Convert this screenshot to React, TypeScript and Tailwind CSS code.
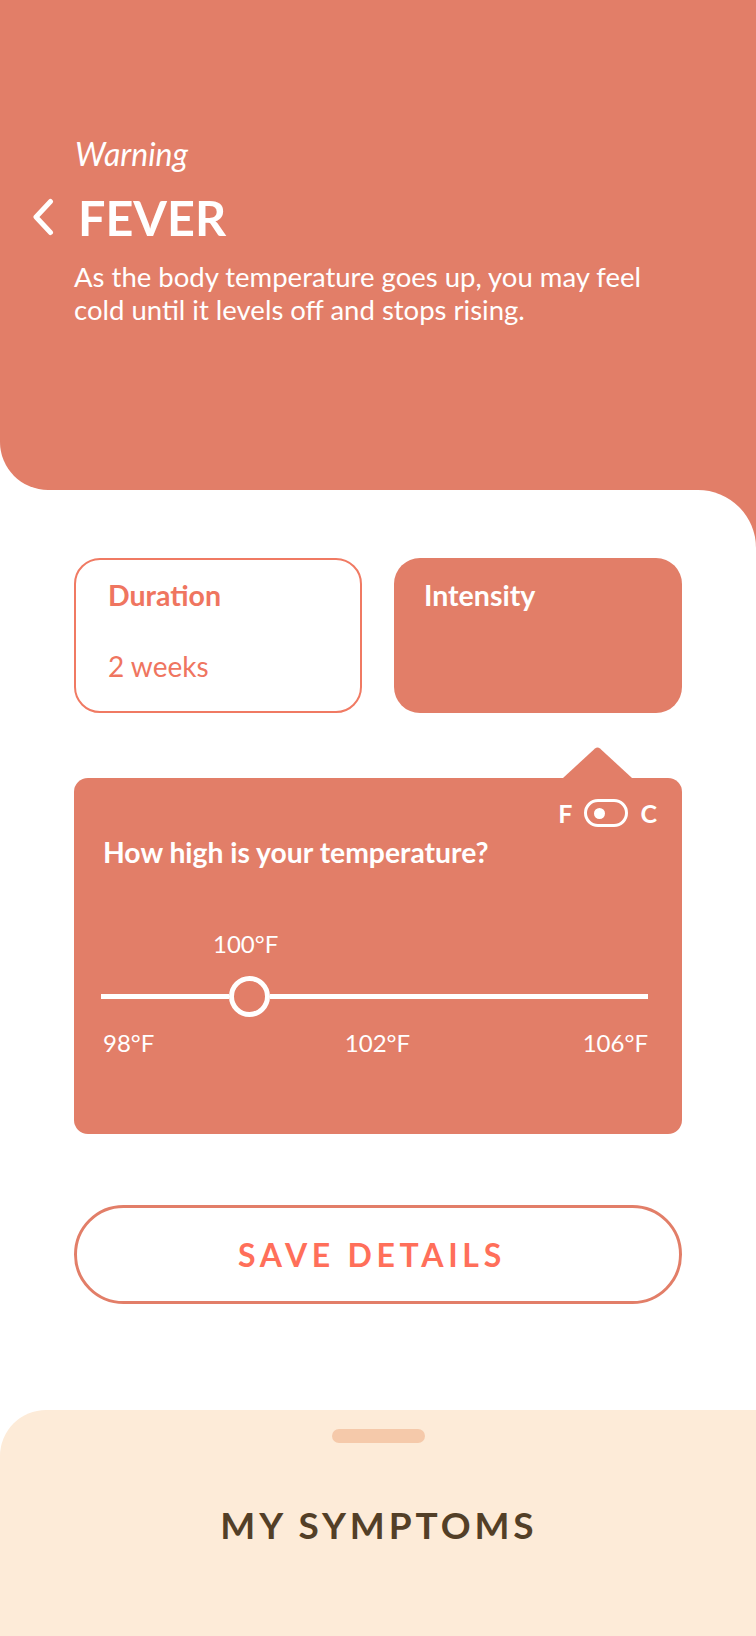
import React from "react"

const ticks = ["98°F", "102°F", "106°F"]

function BackChevron() {
    return (
        <svg width="24" height="38" viewBox="0 0 24 38" fill="none" className="shrink-0">
            <path d="M19.5 3.5L5 19L19.5 34.5" stroke="white" strokeWidth="5" strokeLinecap="round" strokeLinejoin="round" />
        </svg>
    )
}

function UnitToggle() {
    return (
        <div className="-mr-[9px] flex items-center gap-[12px] text-[25px] font-bold leading-none text-white">
            <span>F</span>
            <div className="flex h-[28px] w-[44px] items-center rounded-full border-[3px] border-white pl-[7px]">
                <div className="h-[11px] w-[11px] rounded-full bg-white" />
            </div>
            <span>C</span>
        </div>
    )
}

function TempSlider() {
    return (
        <div className="flex h-[41px] items-center">
            <div className="h-[5px] w-[128px] bg-white" />
            <div className="h-[41px] w-[41px] shrink-0 rounded-full border-[5px] border-white bg-[#E27E68]" />
            <div className="h-[5px] flex-1 bg-white" />
        </div>
    )
}

export default function App() {
    return (
        <div className="flex h-[1636px] flex-col overflow-hidden bg-white font-['Lato',sans-serif]">
            <header className="h-[490px] shrink-0 rounded-bl-[48px] bg-[#E27E68] px-[31px] pt-[136px] text-white">
                <p className="pl-[44px] text-[32px] italic leading-[36px]">Warning</p>
                <div className="mt-[17px] flex items-center gap-[23px]">
                    <BackChevron />
                    <h1 className="text-[48.5px] font-bold leading-[56px]">FEVER</h1>
                </div>
                <p className="mt-[15px] max-w-[650px] pl-[43px] text-[27.5px] leading-[33px]">
                    As the body temperature goes up, you may feel cold until it levels off and stops rising.
                </p>
            </header>

            <div className="shrink-0 bg-[#E27E68]">
                <main className="rounded-tr-[58px] bg-white px-[74px] pt-[68px]">
                    <div className="grid grid-cols-2 gap-[32px]">
                        <div className="h-[155px] rounded-[26px] border-2 border-[#F07A63] px-[32px] pt-[19px] text-[#EF7560]">
                            <p className="text-[28.5px] font-bold leading-[32px]">Duration</p>
                            <p className="mt-[39px] text-[28px] leading-[32px]">2 weeks</p>
                        </div>
                        <div className="h-[155px] rounded-[26px] bg-[#E27E68] px-[30px] pt-[21px] text-white">
                            <p className="text-[28.5px] font-bold leading-[32px]">Intensity</p>
                        </div>
                    </div>

                    <div className="mt-[33px] flex justify-end pr-[50px]">
                        <svg width="69" height="32" viewBox="0 0 69 32" className="block">
                            <path d="M0 32L32 2.5Q34.5 0.5 37 2.5L69 32Z" fill="#E27E68" />
                        </svg>
                    </div>

                    <section className="h-[356px] rounded-[14px] bg-[#E27E68] pl-[27px] pr-[34px] pt-[21px] text-white">
                        <div className="flex justify-end">
                            <UnitToggle />
                        </div>
                        <p className="mt-[9px] ml-[2px] text-[28.3px] font-bold leading-[32px]">
                            How high is your temperature?
                        </p>
                        <p className="mt-[61px] ml-[112px] text-[24px] leading-[30px]">100°F</p>
                        <div className="mt-[17px]">
                            <TempSlider />
                        </div>
                        <div className="mt-[11px] grid grid-cols-3 text-[24px] leading-[30px]">
                            {ticks.map((t, i) => (
                                <span
                                    key={t}
                                    className={i === 0 ? "ml-[2px] text-left" : i === 1 ? "pl-[6px] text-center" : "text-right"}
                                >
                                    {t}
                                </span>
                            ))}
                        </div>
                    </section>

                    <button className="mt-[71px] flex h-[99px] w-full items-center justify-center rounded-full border-[3px] border-[#E27E68] bg-white">
                        <span className="mr-[12px] text-[32px] font-bold tracking-[0.147em] text-[#FF6F5A]">
                            SAVE DETAILS
                        </span>
                    </button>
                </main>
            </div>

            <div className="mt-[106px] flex flex-1 flex-col items-center rounded-tl-[46px] bg-[#FDEBD8]">
                <div className="mt-[19px] h-[14px] w-[93px] rounded-full bg-[#F5C9AA]" />
                <h2 className="mt-[62px] pl-[0.05em] text-[37px] font-bold leading-[40px] tracking-[0.105em] text-[#533F27]">
                    MY SYMPTOMS
                </h2>
            </div>
        </div>
    )
}
